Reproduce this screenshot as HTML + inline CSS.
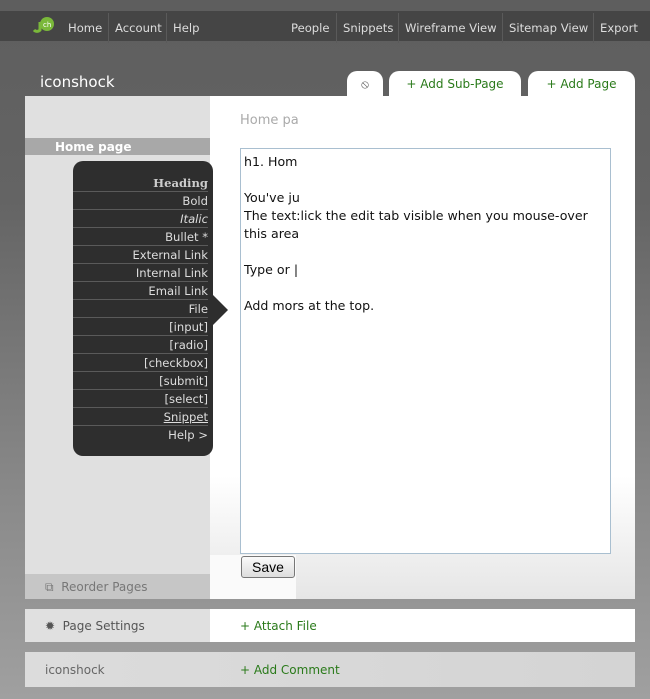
<!DOCTYPE html>
<html><head><style>
body{margin:0;width:650px;height:699px;overflow:hidden;font-family:"DejaVu Sans","Liberation Sans",sans-serif;background:linear-gradient(#5e5e5e 0,#646464 200px,#8a8a8a 500px,#a0a0a0 699px);position:relative;font-size:12px}
.a{position:absolute}
.top{left:0;top:11px;width:650px;height:30px;background:#454545}
.top span{position:absolute;top:2px;height:30px;line-height:30px;color:#ddd;font-size:11.6px;border-left:1px solid #5a5a5a;padding:0 6px}
.green{color:#2a7a1a}
.menu{left:73px;top:161px;width:140px;height:295px;background:#2e2e2e;border-radius:10px}
.menu div{position:absolute;right:5px;width:135px;text-align:right;color:#ddd;font-size:11.6px;height:17px;line-height:19px;border-bottom:1px solid #5a5a5a}
.tab{top:71px;height:25px;background:#fff;border-radius:10px 10px 0 0;text-align:center;line-height:27px;font-size:12px;color:#2a7a1a}
.ta{font-size:12.6px;color:#111;line-height:18px}
</style></head><body>
<div class="a top">
<div class="a" style="left:33px;top:5px;width:20px;height:20px"><svg width="22" height="20"><circle cx="14" cy="8" r="7" fill="#7ab83a"/><path d="M7 6 v8 a4 4 0 0 1 -6 0" stroke="#7ab83a" stroke-width="3" fill="none"/><text x="10" y="11" font-size="7" fill="#fff">ch</text></svg></div>
<span style="left:62px;border:0">Home</span><span style="left:108px">Account</span><span style="left:166px">Help</span>
<span style="left:285px;border:0">People</span><span style="left:336px">Snippets</span><span style="left:398px">Wireframe View</span><span style="left:502px">Sitemap View</span><span style="left:593px">Export</span>
</div>
<div class="a" style="left:40px;top:73px;color:#fff;font-size:15px">iconshock</div>
<div class="a tab" style="left:347px;width:36px;color:#555">⦸</div>
<div class="a tab" style="left:389px;width:132px">+ Add Sub-Page</div>
<div class="a tab" style="left:528px;width:107px">+ Add Page</div>
<div class="a" style="left:25px;top:96px;width:185px;height:503px;background:#e0e0e0"></div>
<div class="a" style="left:210px;top:96px;width:425px;height:503px;background:linear-gradient(#fff 0,#fff 380px,#e6e6e6 503px)"></div>
<div class="a" style="left:210px;top:555px;width:86px;height:44px;background:#fafafa"></div>
<div class="a" style="left:25px;top:138px;width:185px;height:17px;background:#a8a8a8;color:#fff;font-weight:bold;font-size:12px;line-height:19px;text-indent:30px">Home page</div>
<div class="a" style="left:240px;top:113px;color:#aaa;font-size:13px">Home pa</div>
<div class="a" style="left:240px;top:148px;width:369px;height:404px;border:1px solid #a9bfd0;background:#fff"></div>
<div class="a ta" style="left:244px;top:153px">h1. Hom<br><br>You've ju<br>The text:lick the edit tab visible when you mouse-over<br>this area<br><br>Type or |<br><br>Add mors at the top.</div>
<div class="a" style="left:241px;top:556px;width:52px;height:20px;border:1px solid #777;border-radius:3px;background:linear-gradient(#fafafa,#ddd);font-family:'Liberation Sans',sans-serif;font-size:14px;text-align:center;line-height:21px">Save</div>
<div class="a menu">
<div style="top:13px;font-family:'DejaVu Serif',serif;font-weight:bold;color:#ccc">Heading</div>
<div style="top:31px">Bold</div>
<div style="top:49px;font-style:italic">Italic</div>
<div style="top:67px">Bullet *</div>
<div style="top:85px">External Link</div>
<div style="top:103px">Internal Link</div>
<div style="top:121px">Email Link</div>
<div style="top:139px">File</div>
<div style="top:157px">[input]</div>
<div style="top:175px">[radio]</div>
<div style="top:193px">[checkbox]</div>
<div style="top:211px">[submit]</div>
<div style="top:229px">[select]</div>
<div style="top:247px;text-decoration:underline">Snippet</div>
<div style="top:265px;border:0">Help &gt;</div>
</div>
<div class="a" style="left:213px;top:295px;width:0;height:0;border-top:15px solid transparent;border-bottom:15px solid transparent;border-left:15px solid #2e2e2e"></div>
<div class="a" style="left:25px;top:574px;width:185px;height:25px;background:#c6c6c6;color:#777;line-height:27px;text-indent:20px">⧉ &nbsp;Reorder Pages</div>
<div class="a" style="left:25px;top:609px;width:185px;height:33px;background:#e0e0e0;color:#555;line-height:35px;text-indent:20px">✹ &nbsp;Page Settings</div>
<div class="a green" style="left:210px;top:609px;width:425px;height:33px;background:#fff;line-height:35px;text-indent:30px">+ Attach File</div>
<div class="a" style="left:25px;top:652px;width:610px;height:35px;background:linear-gradient(90deg,#dcdcdc,#d4d4d4);line-height:37px;color:#666"><span style="position:absolute;left:20px">iconshock</span><span class="green" style="position:absolute;left:215px">+ Add Comment</span></div>
</body></html>
